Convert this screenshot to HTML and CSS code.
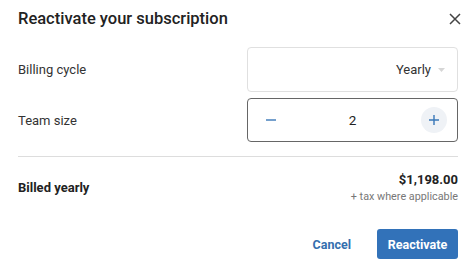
FILE: index.html
```html
<!DOCTYPE html>
<html lang="en">
<head>
    <meta charset="UTF-8">
    <meta name="viewport" content="width=device-width, initial-scale=1.0">
    <title>Reactivate your subscription</title>
    <link rel="stylesheet" href="styles.css">
</head>
<body>
    <section class="dialog">
        <header class="dialog-header">
            <h1 class="dialog-title">Reactivate your subscription</h1>
            <button class="close" aria-label="Close">
                <svg width="12" height="12" viewBox="0 0 12 12"><path d="M1 1L11 11M11 1L1 11" stroke="#444" stroke-width="1.5" fill="none"/></svg>
            </button>
        </header>

        <div class="field">
            <span class="field-label">Billing cycle</span>
            <div class="select">
                <span>Yearly</span>
                <svg class="caret" width="7" height="4" viewBox="0 0 7 4"><path d="M0 0L3.5 4L7 0Z" fill="#d6d6d6"/></svg>
            </div>
        </div>

        <div class="field">
            <span class="field-label">Team size</span>
            <div class="stepper">
                <button class="step">
                    <svg width="12" height="12" viewBox="0 0 12 12"><path d="M1 6H11" stroke="#3a78b8" stroke-width="1.4"/></svg>
                </button>
                <span class="count">2</span>
                <button class="step step-plus">
                    <svg width="12" height="12" viewBox="0 0 12 12"><path d="M1 6H11M6 1V11" stroke="#3a78b8" stroke-width="1.4"/></svg>
                </button>
            </div>
        </div>

        <hr class="divider">

        <div class="summary">
            <span class="summary-label">Billed yearly</span>
            <div class="price">
                <div class="amount">$1,198.00</div>
                <div class="tax">+ tax where applicable</div>
            </div>
        </div>

        <footer class="actions">
            <button class="btn-link">Cancel</button>
            <button class="btn-primary">Reactivate</button>
        </footer>
    </section>
</body>
</html>
```

FILE: styles.css
```css
body {
    margin: 0;
    background: #fff;
    font-family: Roboto, "Liberation Sans", sans-serif;
    color: #222;
}
.dialog {
    padding: 0 16px 0 18px;
}
.dialog-header {
    display: flex;
    justify-content: space-between;
    align-items: center;
    height: 37px;
}
.dialog-title {
    margin: 0;
    font-size: 16.5px;
    font-weight: 500;
    color: #222;
}
.close {
    border: none;
    background: none;
    padding: 0;
    margin-right: -3px;
    display: flex;
}
.field {
    display: flex;
    justify-content: space-between;
    align-items: center;
    margin-top: 10px;
}
.field + .field {
    margin-top: 6px;
}
.field-label {
    font-size: 13px;
    color: #333;
}
.select,
.stepper {
    box-sizing: border-box;
    width: 211px;
    height: 45px;
    border-radius: 4px;
    display: flex;
    align-items: center;
}
.select {
    border: 1px solid #e0e0e0;
    justify-content: flex-end;
    padding-right: 12px;
    font-size: 13px;
    color: #333;
}
.caret {
    margin-left: 7px;
}
.stepper {
    height: 44px;
    border: 1px solid #666;
    justify-content: space-between;
    padding: 0 10px;
}
.step {
    width: 26px;
    height: 26px;
    border: none;
    border-radius: 50%;
    background: none;
    padding: 0;
    display: flex;
    align-items: center;
    justify-content: center;
}
.step-plus {
    background: #eff2f6;
}
.count {
    font-size: 13.5px;
    color: #222;
}
.divider {
    border: none;
    border-top: 1px solid #ddd;
    margin: 14px 0 0;
}
.summary {
    display: flex;
    justify-content: space-between;
    align-items: center;
    margin-top: 15px;
}
.summary-label {
    font-size: 13px;
    font-weight: 700;
    color: #222;
}
.price {
    text-align: right;
}
.amount {
    font-size: 13px;
    font-weight: 700;
    color: #222;
}
.tax {
    margin-top: 3px;
    font-size: 10.8px;
    color: #777;
}
.actions {
    display: flex;
    justify-content: flex-end;
    align-items: center;
    gap: 26px;
    margin-top: 26px;
}
.btn-link {
    border: none;
    background: none;
    padding: 0;
    font-family: inherit;
    font-size: 12.5px;
    font-weight: 700;
    color: #346fae;
}
.btn-primary {
    border: none;
    border-radius: 3px;
    background: #3272b9;
    color: #fff;
    font-family: inherit;
    font-size: 12.5px;
    font-weight: 700;
    width: 81px;
    height: 30px;
    padding: 0;
}
```
